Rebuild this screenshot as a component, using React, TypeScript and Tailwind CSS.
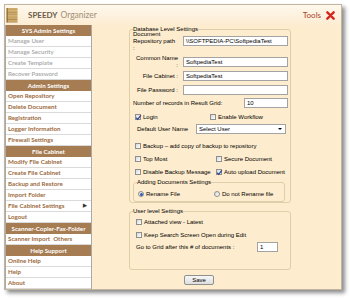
import React from 'react'

const menu: { t: string; k: 'h' | 'g' | 'b'; arrow?: boolean }[] = [
  { t: 'SYS Admin Settings', k: 'h' },
  { t: 'Manage User', k: 'g' },
  { t: 'Manage Security', k: 'g' },
  { t: 'Create Template', k: 'g' },
  { t: 'Recover Password', k: 'g' },
  { t: 'Admin Settings', k: 'h' },
  { t: 'Open Repository', k: 'b' },
  { t: 'Delete Document', k: 'b' },
  { t: 'Registration', k: 'b' },
  { t: 'Logger Information', k: 'b' },
  { t: 'Firewall Settings', k: 'b' },
  { t: 'File Cabinet', k: 'h' },
  { t: 'Modify File Cabinet', k: 'b' },
  { t: 'Create File Cabinet', k: 'b' },
  { t: 'Backup and Restore', k: 'b' },
  { t: 'Import Folder', k: 'b' },
  { t: 'File Cabinet Settings', k: 'b', arrow: true },
  { t: 'Logout', k: 'b' },
  { t: 'Scanner-Copier-Fax-Folder', k: 'h' },
  { t: 'Scanner Import  Others', k: 'b' },
  { t: 'Help  Support', k: 'h' },
  { t: 'Online Help', k: 'b' },
  { t: 'Help', k: 'b' },
  { t: 'About', k: 'b' },
]

function Check({ on }: { on?: boolean }) {
  return (
    <span className="relative flex h-[6px] w-[6px] shrink-0 items-center justify-center border border-[#8e8f8f] bg-linear-to-br from-[#d8d8d8] to-white">
      {on && (
        <svg viewBox="0 0 8 8" className="absolute h-[7px] w-[7px]">
          <path d="M1.4 4.3 L3.1 6.1 L6.7 1.5" stroke="#2a4690" strokeWidth="1.5" fill="none" />
        </svg>
      )}
    </span>
  )
}

function Radio({ on }: { on?: boolean }) {
  return (
    <span className="flex h-[6px] w-[6px] shrink-0 items-center justify-center rounded-full border border-[#8e8f8f] bg-linear-to-br from-[#d8d8d8] to-white">
      {on && <span className="h-[3px] w-[3px] rounded-full bg-[#2d5fb0]" />}
    </span>
  )
}

function Box({ w, v }: { w: string; v?: string }) {
  return (
    <div className={`flex h-[10px] items-center border border-[#a3a3a3] bg-white px-[2px] text-[6px] leading-[8px] ${w}`}>
      {v}
    </div>
  )
}

function CheckRow({ cls, items }: { cls: string; items: { t: string; on?: boolean; w?: string }[] }) {
  return (
    <div className={`flex h-[8px] items-center ${cls}`}>
      {items.map((i) => (
        <div key={i.t} className={`flex items-center gap-[2px] ${i.w ?? ''}`}>
          <Check on={i.on} />
          <span>{i.t}</span>
        </div>
      ))}
    </div>
  )
}

export default function App() {
  return (
    <div className="h-[299px] w-[350px] bg-white pl-[4px] pt-[4px]">
      <div className="flex h-[286px] w-[338px] flex-col border border-[#c2b59d] shadow-[3px_3px_4px_rgba(0,0,0,0.45)]">
        {/* title bar */}
        <div className="flex h-[20px] items-center bg-linear-to-b from-[#fff8ec] to-[#fcecd2] pl-[1px] pr-[6px]">
          <svg viewBox="0 0 12 17" className="h-[17px] w-[12px]">
            {[1, 3.4, 5.8, 8.2, 10.6, 13].map((y, i) => (
              <g key={i}>
                <rect x="0.5" y={y} width="11" height="1.7" fill="#d2ab63" />
                <rect x="0.5" y={y + 1.7} width="11" height="0.7" fill="#8c6a30" />
              </g>
            ))}
            <rect x="0.5" y="1" width="1.5" height="14.4" fill="#7a5a28" opacity="0.6" />
          </svg>
          <span className="ml-[10px] font-['Lato',sans-serif] text-[8px] font-bold text-[#6c5c4a]">SPEEDY</span>
          <span className="ml-[3px] font-['Lato',sans-serif] text-[8.5px] text-[#a08e7a]">Organizer</span>
          <span className="ml-auto font-['Lato',sans-serif] text-[8px] text-[#a8432b]">Tools</span>
          <svg viewBox="0 0 10 10" className="ml-[5px] h-[9px] w-[9px]">
            <path d="M1.5 1.5 L8.5 8.5 M8.5 1.5 L1.5 8.5" stroke="#d3261c" strokeWidth="2.6" strokeLinecap="round" />
          </svg>
        </div>
        <div className="flex flex-1">
          {/* sidebar */}
          <div className="flex w-[87px] flex-col border-x border-[#a9a9a9] font-['Lato',sans-serif] text-[6.2px] font-bold">
            {menu.map((m) =>
              m.k === 'h' ? (
                <div key={m.t} className="flex h-[11px] items-center justify-center bg-[#a67c52] text-white">
                  {m.t}
                </div>
              ) : (
                <div
                  key={m.t}
                  className={`flex h-[11px] items-center border-b border-[#dadada] bg-white pl-[2px] pr-[4px] ${
                    m.k === 'g' ? 'font-semibold text-[#a6a6a6]' : 'text-[#9c6a3e]'
                  }`}
                >
                  <span className="whitespace-pre">{m.t}</span>
                  {m.arrow && <span className="ml-auto text-[5px] text-[#333]">▶</span>}
                </div>
              ),
            )}
          </div>
          {/* main */}
          <div className="flex-1 bg-[#fdeccd] pt-[1px] font-['Liberation_Sans',Arial,sans-serif] text-[6px] leading-[7px] text-black">
            <div className="ml-[37px] w-[162px]">
              <fieldset className="rounded-[3px] border border-[#e0cdaa] pl-[3px] pr-[2px]">
                <legend className="text-[6px] leading-[7px]">Database Level Settings</legend>
                <div className="flex h-[16px] items-center">
                  <div className="w-[45px]">
                    Document
                    <br />
                    Repository path :
                  </div>
                  <div className="ml-[5px]">
                    <Box w="w-[105px]" v="\\SOFTPEDIA-PC\SoftpediaTest" />
                  </div>
                </div>
                <div className="mt-[8px] flex h-[10px] items-center">
                  <div className="w-[45px] text-right">Common Name :</div>
                  <div className="ml-[5px]">
                    <Box w="w-[105px]" v="SoftpediaTest" />
                  </div>
                </div>
                <div className="mt-[4px] flex h-[10px] items-center">
                  <div className="w-[45px] text-right">File Cabinet :</div>
                  <div className="ml-[5px]">
                    <Box w="w-[105px]" v="SoftpediaTest" />
                  </div>
                </div>
                <div className="mt-[4px] flex h-[10px] items-center">
                  <div className="w-[45px] text-right">File Password :</div>
                  <div className="ml-[5px]">
                    <Box w="w-[105px]" />
                  </div>
                </div>
                <div className="mt-[3px] flex h-[10px] items-center">
                  <div className="w-[111px]">Number of records in Result Grid:</div>
                  <Box w="w-[44px]" v="10" />
                </div>
                <CheckRow
                  cls="mt-[5px] ml-[2px]"
                  items={[
                    { t: 'Login', on: true, w: 'w-[75px]' },
                    { t: 'Enable Workflow' },
                  ]}
                />
                <div className="mt-[3px] ml-[4px] flex h-[10px] items-center">
                  <div className="w-[59px]">Default User Name</div>
                  <div className="flex h-[10px] w-[90px] items-center justify-between border border-[#a3a3a3] bg-white pl-[2px] pr-[3px]">
                    <span>Select User</span>
                    <svg viewBox="0 0 4 2" className="h-[2px] w-[4px]">
                      <path d="M0 0 L4 0 L2 2 Z" fill="#000" />
                    </svg>
                  </div>
                </div>
                <CheckRow cls="mt-[8px] ml-[2px]" items={[{ t: 'Backup – add copy of backup to repository' }]} />
                <CheckRow
                  cls="mt-[5px] ml-[2px]"
                  items={[
                    { t: 'Top Most', w: 'w-[81px]' },
                    { t: 'Secure Document' },
                  ]}
                />
                <CheckRow
                  cls="mt-[5px] ml-[2px]"
                  items={[
                    { t: 'Disable Backup Message', w: 'w-[81px]' },
                    { t: 'Auto upload Document', on: true },
                  ]}
                />
                <fieldset className="mr-[3px] mt-[3px] rounded-[3px] border border-[#e0cdaa] pb-[3px] pl-[3px]">
                  <legend className="text-[6px] leading-[7px]">Adding Documents Settings</legend>
                  <div className="ml-[1px] mt-[4px] flex h-[8px] items-center">
                    <div className="flex w-[76px] items-center gap-[2px]">
                      <Radio on />
                      <span>Rename File</span>
                    </div>
                    <div className="flex items-center gap-[2px]">
                      <Radio />
                      <span>Do not Rename file</span>
                    </div>
                  </div>
                </fieldset>
              </fieldset>
              <fieldset className="mt-[5px] rounded-[3px] border border-[#e0cdaa] pb-[17px] pl-[3px]">
                <legend className="text-[6px] leading-[7px]">User level Settings</legend>
                <CheckRow cls="mt-[3px] ml-[3px]" items={[{ t: 'Attached view - Latest' }]} />
                <CheckRow cls="mt-[5px] ml-[3px]" items={[{ t: 'Keep Search Screen Open during Edit' }]} />
                <div className="ml-[3px] mt-[3px] flex h-[10px] items-center">
                  <div className="w-[121px]">Go to Grid after this # of documents :</div>
                  <Box w="w-[21px]" v="1" />
                </div>
              </fieldset>
              <div className="ml-[55px] mt-[5px] flex h-[10px] w-[30px] items-center justify-center rounded-[2px] border border-[#8f8f8f] bg-linear-to-b from-[#f7f7f7] to-[#dedede]">
                Save
              </div>
            </div>
          </div>
        </div>
      </div>
    </div>
  )
}
